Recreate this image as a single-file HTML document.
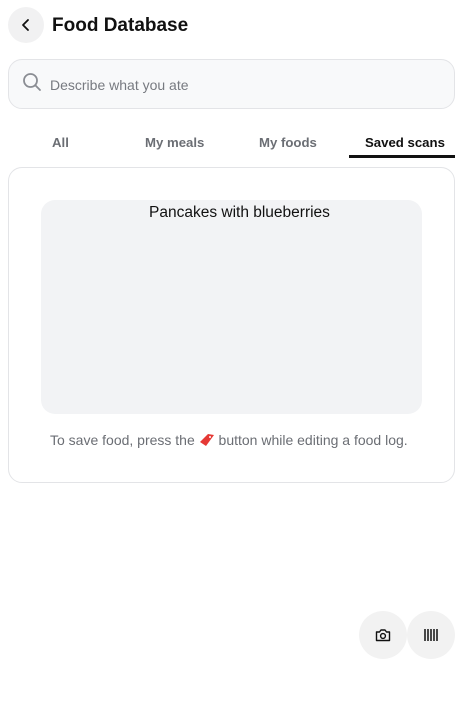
<!DOCTYPE html>
<html><head><meta charset="utf-8"><style>
*{box-sizing:border-box;margin:0;padding:0}
body{width:463px;height:722px;background:#fff;font-family:"Liberation Sans","DejaVu Sans",sans-serif;position:relative;overflow:hidden}
.back{position:absolute;left:8px;top:7px;width:36px;height:36px;border-radius:50%;background:#f1f1f2;display:flex;align-items:center;justify-content:center}
h1{position:absolute;left:52px;top:15px;font-size:19px;font-weight:bold;color:#111}
.search{position:absolute;left:8px;top:59px;width:447px;height:50px;border:1px solid #e3e4e7;border-radius:14px;background:#f8f9fa}
.search span{position:absolute;left:41px;top:17px;font-size:14px;color:#777a80}
.tab{position:absolute;top:135px;font-size:13.2px;font-weight:bold;color:#6b6e74}
.ul{position:absolute;left:349px;top:155px;width:106px;height:3px;background:#111}
.card{position:absolute;left:8px;top:167px;width:447px;height:316px;border:1px solid #e3e4e7;border-radius:14px}
.img{position:absolute;left:41px;top:200px;width:381px;height:214px;background:#f2f3f5;border-radius:14px}
.img span{position:absolute;left:108px;top:4px;font-size:15.5px;color:#111}
.note{position:absolute;left:50px;top:432px;font-size:14px;color:#6b6e74;white-space:nowrap}
.fab{position:absolute;top:611px;width:48px;height:48px;border-radius:50%;background:#f2f2f2;display:flex;align-items:center;justify-content:center}
</style></head><body>
<div class="back"><svg width="14" height="14" viewBox="0 0 14 14"><path d="M9 2L4 7l5 5" fill="none" stroke="#111" stroke-width="1.8" stroke-linecap="round" stroke-linejoin="round"/></svg></div>
<h1>Food Database</h1>
<div class="search"><svg style="position:absolute;left:13px;top:12px" width="20" height="20" viewBox="0 0 20 20"><circle cx="8.5" cy="8.5" r="6.5" fill="none" stroke="#8a8d93" stroke-width="1.8"/><path d="M13.3 13.3L18 18" stroke="#8a8d93" stroke-width="1.8" stroke-linecap="round"/></svg><span>Describe what you ate</span></div>
<div class="tab" style="left:52px">All</div>
<div class="tab" style="left:145px">My meals</div>
<div class="tab" style="left:259px">My foods</div>
<div class="tab" style="left:365px;color:#111">Saved scans</div>
<div class="ul"></div>
<div class="card"></div>
<div class="img"><span>Pancakes with blueberries</span></div>
<div class="note">To save food, press the <svg width="16" height="14" viewBox="0 0 16 14" style="vertical-align:-2px"><path d="M1 9l8-8 6 1-8 11z" fill="#e53935"/><circle cx="11" cy="4" r="1" fill="#fff"/></svg> button while editing a food log.</div>
<div class="fab" style="left:359px"><svg width="16" height="14" viewBox="0 0 16 14"><path d="M1.5 4h3l1.5-2h4l1.5 2h3v8.5h-13z" fill="none" stroke="#111" stroke-width="1.4" stroke-linejoin="round"/><circle cx="8" cy="8" r="2.4" fill="none" stroke="#111" stroke-width="1.4"/></svg></div>
<div class="fab" style="left:407px"><svg width="16" height="12" viewBox="0 0 16 12"><path d="M2 0v12M5 0v12M8 0v12M11 0v12M14 0v12" stroke="#111" stroke-width="1.5"/></svg></div>
</body></html>
